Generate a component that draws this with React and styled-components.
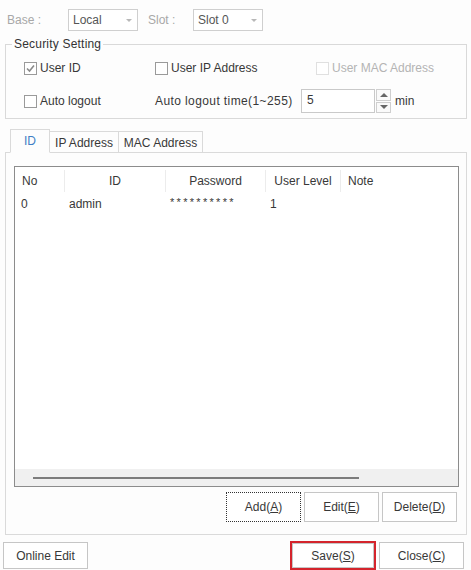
import React from 'react'
import styled, { createGlobalStyle } from 'styled-components'

const Global = createGlobalStyle`
  body {
    margin: 0;
    background: #fdfdfd;
    font-family: "Liberation Sans", Arial, sans-serif;
    font-size: 12px;
    color: #383838;
  }
`

const Window = styled.div`
  width: 471px;
  height: 570px;
  overflow: hidden;
  box-sizing: border-box;
`

const TopRow = styled.div`
  display: flex;
  align-items: center;
  height: 22px;
  margin-top: 9px;
  padding-left: 7px;
`

const FieldLabel = styled.span`
  color: #a8a8a8;
  width: ${p => p.w}px;
  margin-left: ${p => p.ml || 0}px;
`

const Combo = styled.div`
  width: 70px;
  height: 22px;
  box-sizing: border-box;
  border: 1px solid #cfcfcf;
  background: #fff;
  color: #555;
  display: flex;
  align-items: center;
  justify-content: space-between;
  padding-left: 4px;
`

const Caret = styled.span`
  width: 0;
  height: 0;
  border-left: 3px solid transparent;
  border-right: 3px solid transparent;
  border-top: 3px solid #b8b8b8;
  margin-right: 5px;
`

const Group = styled.fieldset`
  margin: 6px 5px 0 5px;
  padding: 0;
  width: 462px;
  box-sizing: border-box;
  border: 1px solid #d9d9d9;
  min-width: 0;
`

const Legend = styled.legend`
  margin-left: 6px;
  padding: 0 2px;
  line-height: 14px;
  color: #333;
  letter-spacing: 0.2px;
`

const OptionGrid = styled.div`
  display: grid;
  grid-template-columns: 131px 161px 1fr;
  grid-template-rows: 20px 24px;
  row-gap: 11px;
  align-items: center;
  padding: 7px 0 5px 18px;
`

const CheckItem = styled.label`
  display: flex;
  align-items: center;
  gap: 3px;
  color: ${p => (p.disabled ? '#b4b4b4' : '#383838')};
`

const Box = styled.span`
  width: 13px;
  height: 13px;
  box-sizing: border-box;
  border: 1px solid ${p => (p.disabled ? '#e0e0e0' : '#9a9a9a')};
  background: #fff;
  display: flex;
  align-items: center;
  justify-content: center;
`

const TimeCell = styled.div`
  grid-column: 2 / 4;
  display: flex;
  align-items: center;
`

const TimeLabel = styled.span`
  width: 140px;
  letter-spacing: 0.4px;
  white-space: nowrap;
`

const NumInput = styled.div`
  width: 74px;
  height: 24px;
  box-sizing: border-box;
  border: 1px solid #c9c9c9;
  background: #fff;
  margin-left: 6px;
  padding: 3px 0 0 5px;
`

const Spinner = styled.div`
  width: 15px;
  height: 24px;
  margin-left: 1px;
  display: flex;
  flex-direction: column;
  gap: 1px;
`

const SpinHalf = styled.div`
  flex: 1;
  border: 1px solid #cfcfcf;
  background: #fafafa;
  display: flex;
  align-items: center;
  justify-content: center;
`

const Tri = styled.span`
  width: 0;
  height: 0;
  border-left: 4px solid transparent;
  border-right: 4px solid transparent;
  ${p => (p.up ? 'border-bottom: 4px solid #666;' : 'border-top: 4px solid #666;')}
`

const Unit = styled.span`
  margin-left: 4px;
`

const TabStrip = styled.div`
  display: flex;
  align-items: flex-end;
  height: 23px;
  margin: 10px 0 0 10px;
  position: relative;
  z-index: 1;
`

const Tab = styled.div`
  width: ${p => p.w}px;
  height: ${p => (p.active ? 24 : 21)}px;
  box-sizing: border-box;
  border: 1px solid #dadada;
  border-bottom: ${p => (p.active ? '1px solid #fdfdfd' : 'none')};
  margin-left: ${p => (p.first ? 0 : -1)}px;
  background: #fdfdfd;
  color: ${p => (p.active ? '#3f7fc6' : '#383838')};
  display: flex;
  align-items: center;
  justify-content: center;
  margin-bottom: ${p => (p.active ? -1 : 0)}px;
  padding-top: ${p => (p.active ? 0 : 2)}px;
`

const Panel = styled.div`
  margin: 0 4px 0 5px;
  height: 383px;
  box-sizing: border-box;
  border: 1px solid #dadada;
  padding: 13px 7px 0 8px;
`

const ListView = styled.div`
  height: 321px;
  box-sizing: border-box;
  border: 1px solid #8c8c8c;
  background: #fff;
  display: flex;
  flex-direction: column;
`

const cols = '50px 101px 100px 75px 1fr'

const HeaderRow = styled.div`
  display: grid;
  grid-template-columns: ${cols};
  height: 28px;
`

const HeadCell = styled.div`
  display: flex;
  align-items: center;
  justify-content: ${p => (p.left ? 'flex-start' : 'center')};
  padding-left: ${p => (p.left ? 7 : 0)}px;
  border-right: ${p => (p.last ? 'none' : '1px solid #ececec')};
  margin: 3px 0;
`

const DataRow = styled.div`
  display: grid;
  grid-template-columns: ${cols};
  height: 18px;
  align-items: center;
`

const DataCell = styled.div`
  padding-left: ${p => p.pl}px;
  font-size: ${p => (p.small ? 11 : 12)}px;
  letter-spacing: ${p => (p.small ? 2.3 : 0)}px;
  margin-top: ${p => (p.small ? -4 : 0)}px;
`

const ListBody = styled.div`
  flex: 1;
`

const HScroll = styled.div`
  height: 17px;
  background: #f0f0f0;
  display: flex;
  align-items: center;
  padding-left: 18px;
`

const Thumb = styled.div`
  width: 326px;
  height: 2px;
  background: #7c7c7c;
`

const ButtonBar = styled.div`
  display: flex;
  justify-content: flex-end;
  gap: 3px;
  margin-top: 5px;
  padding-right: 2px;
`

const Button = styled.button`
  width: ${p => p.w || 75}px;
  height: ${p => p.h || 30}px;
  margin-top: ${p => p.mt || 0}px;
  box-sizing: border-box;
  border: 1px ${p => (p.focus ? 'dotted #333' : 'solid #c6c6c6')};
  background: #fff;
  font-family: "Liberation Sans", Arial, sans-serif;
  font-size: 12px;
  color: #383838;
  padding: 0;
`

const BottomRow = styled.div`
  display: flex;
  align-items: flex-start;
  margin-top: 6px;
  padding: 0 7px 0 3px;
`

const Spacer = styled.div`
  flex: 1;
`

const Highlight = styled.div`
  border: 2px solid #d4242c;
  margin-right: 3px;
  display: flex;
`

const CheckMark = () => (
  <svg width="11" height="11" viewBox="0 0 11 11">
    <path d="M2 5.5 L4.5 8 L9 2.5" fill="none" stroke="#8a8a8a" strokeWidth="1.6" />
  </svg>
)

export default function App() {
  return (
    <Window>
      <Global />
      <TopRow>
        <FieldLabel w={61}>Base :</FieldLabel>
        <Combo>Local<Caret /></Combo>
        <FieldLabel w={45} ml={10}>Slot :</FieldLabel>
        <Combo>Slot 0<Caret /></Combo>
      </TopRow>

      <Group>
        <Legend>Security Setting</Legend>
        <OptionGrid>
          <CheckItem><Box><CheckMark /></Box>User ID</CheckItem>
          <CheckItem><Box />User IP Address</CheckItem>
          <CheckItem disabled><Box disabled />User MAC Address</CheckItem>
          <CheckItem><Box />Auto logout</CheckItem>
          <TimeCell>
            <TimeLabel>Auto logout time(1~255)</TimeLabel>
            <NumInput>5</NumInput>
            <Spinner>
              <SpinHalf><Tri up /></SpinHalf>
              <SpinHalf><Tri /></SpinHalf>
            </Spinner>
            <Unit>min</Unit>
          </TimeCell>
        </OptionGrid>
      </Group>

      <TabStrip>
        <Tab first active w={40}>ID</Tab>
        <Tab w={70}>IP Address</Tab>
        <Tab w={85}>MAC Address</Tab>
      </TabStrip>
      <Panel>
        <ListView>
          <HeaderRow>
            <HeadCell left>No</HeadCell>
            <HeadCell>ID</HeadCell>
            <HeadCell>Password</HeadCell>
            <HeadCell>User Level</HeadCell>
            <HeadCell left last>Note</HeadCell>
          </HeaderRow>
          <ListBody>
            <DataRow>
              <DataCell pl={6}>0</DataCell>
              <DataCell pl={4}>admin</DataCell>
              <DataCell pl={4} small>**********</DataCell>
              <DataCell pl={4}>1</DataCell>
              <DataCell pl={4}></DataCell>
            </DataRow>
          </ListBody>
          <HScroll><Thumb /></HScroll>
        </ListView>
        <ButtonBar>
          <Button focus>Add(<u>A</u>)</Button>
          <Button>Edit(<u>E</u>)</Button>
          <Button>Delete(<u>D</u>)</Button>
        </ButtonBar>
      </Panel>

      <BottomRow>
        <Button w={85} h={27} mt={1}>Online Edit</Button>
        <Spacer />
        <Highlight><Button w={82} h={25}>Save(<u>S</u>)</Button></Highlight>
        <Button w={85} h={27} mt={1}>Close(<u>C</u>)</Button>
      </BottomRow>
    </Window>
  )
}
